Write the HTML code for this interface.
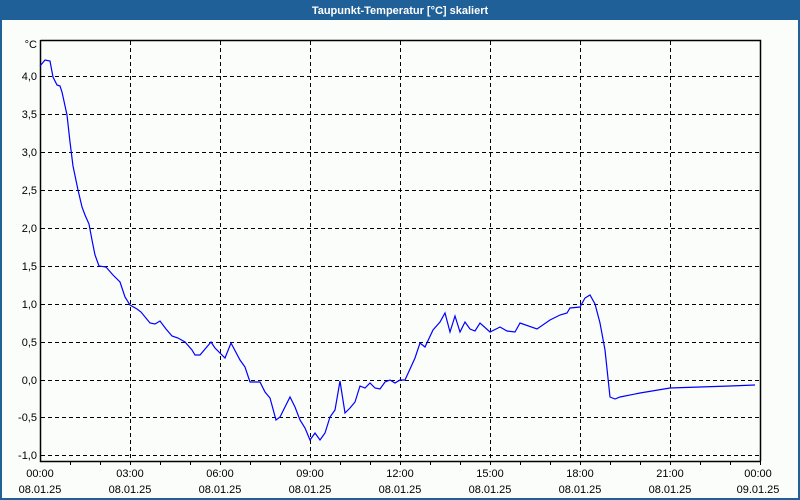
<!DOCTYPE html>
<html><head><meta charset="utf-8"><style>
html,body{margin:0;padding:0;width:800px;height:500px;overflow:hidden;background:#fbfdfa;font-family:"Liberation Sans",sans-serif}
</style></head><body>
<svg width="800" height="500" xmlns="http://www.w3.org/2000/svg" style="display:block">
<rect x="0" y="0" width="800" height="500" fill="#fbfdfa"/>
<rect x="0" y="0" width="800" height="20" fill="#1f6098"/>
<rect x="0" y="0" width="2" height="500" fill="#1f6098"/>
<rect x="798" y="0" width="2" height="500" fill="#1f6098"/>
<rect x="0" y="498" width="800" height="2" fill="#1f6098"/>
<text x="400" y="14" fill="#fff" font-size="11" font-weight="bold" text-anchor="middle" font-family="Liberation Sans, sans-serif">Taupunkt-Temperatur [°C] skaliert</text>
<g stroke="#000" stroke-width="1" stroke-dasharray="4,3" fill="none">
<path d="M130.5 41V461M220.5 41V461M310.5 41V461M400.5 41V461M490.5 41V461M580.5 41V461M670.5 41V461"/>
<path d="M41 76.5H760M41 114.5H760M41 152.5H760M41 190.5H760M41 228.5H760M41 266.5H760M41 304.5H760M41 342.5H760M41 380.5H760M41 417.5H760M41 455.5H760"/>
</g>
<path d="M40.5 40.5H760.5V461M40.5 40V461.5H760.5" stroke="#000" stroke-width="1.5" fill="none"/>
<g stroke="#000" stroke-width="1">
<path d="M70.5 461v4M100.5 461v4M130.5 461v4M160.5 461v4M190.5 461v4M220.5 461v4M250.5 461v4M280.5 461v4M310.5 461v4M340.5 461v4M370.5 461v4M400.5 461v4M430.5 461v4M460.5 461v4M490.5 461v4M520.5 461v4M550.5 461v4M580.5 461v4M610.5 461v4M640.5 461v4M670.5 461v4M700.5 461v4M730.5 461v4M760.5 461v4"/>
</g>
<g font-size="11" fill="#000" text-anchor="end" font-family="Liberation Sans, sans-serif">
<text x="37" y="48">°C</text>
<text x="37" y="80">4,0</text><text x="37" y="118">3,5</text><text x="37" y="156">3,0</text><text x="37" y="194">2,5</text><text x="37" y="232">2,0</text><text x="37" y="270">1,5</text><text x="37" y="308">1,0</text><text x="37" y="346">0,5</text><text x="37" y="384">0,0</text><text x="37" y="421">-0,5</text><text x="37" y="459">-1,0</text>
</g>
<g font-size="11" fill="#000" text-anchor="middle" font-family="Liberation Sans, sans-serif">
<text x="40" y="477">00:00</text><text x="40" y="493">08.01.25</text>
<text x="130" y="477">03:00</text><text x="130" y="493">08.01.25</text>
<text x="220" y="477">06:00</text><text x="220" y="493">08.01.25</text>
<text x="310" y="477">09:00</text><text x="310" y="493">08.01.25</text>
<text x="400" y="477">12:00</text><text x="400" y="493">08.01.25</text>
<text x="490" y="477">15:00</text><text x="490" y="493">08.01.25</text>
<text x="580" y="477">18:00</text><text x="580" y="493">08.01.25</text>
<text x="670" y="477">21:00</text><text x="670" y="493">08.01.25</text>
<text x="758" y="477">00:00</text><text x="758" y="493">09.01.25</text>
</g>
<polyline fill="none" stroke="#0000ff" stroke-width="1.2" points="40,66 45,60 50,61 53,77 57,85 60,86 62,92 67,115 70,142 73,166 78,190 82,207 85,215 89,224 92,240 95,255 99,266 106,267 113,275 120,282 125,297 130,305 137,309 141,312 150,323 155,324 160,321 166,329 172,336 178,338 185,342 192,350 195,355 200,355 211,342 215,348 225,358 231,343 240,360 245,367 250,382 260,382 265,392 270,398 276,420 280,417 290,397 295,407 300,420 305,428 310,440 315,433 320,440 325,433 330,417 335,410 340,381 345,413 350,408 355,402 360,386 365,388 370,383 375,388 380,389 385,382 390,380 395,383 400,380 405,380 415,358 420,343 425,347 433,330 440,322 445,313 450,332 455,316 460,332 465,322 470,329 475,331 480,323 490,332 500,327 507,331 515,332 520,323 537,329 550,320 560,315 567,313 570,308 580,307 585,298 590,295 595,304 600,323 605,350 610,397 615,399 620,397 640,393 670,388 700,387 730,386 755,385"/>
</svg>
</body></html>
